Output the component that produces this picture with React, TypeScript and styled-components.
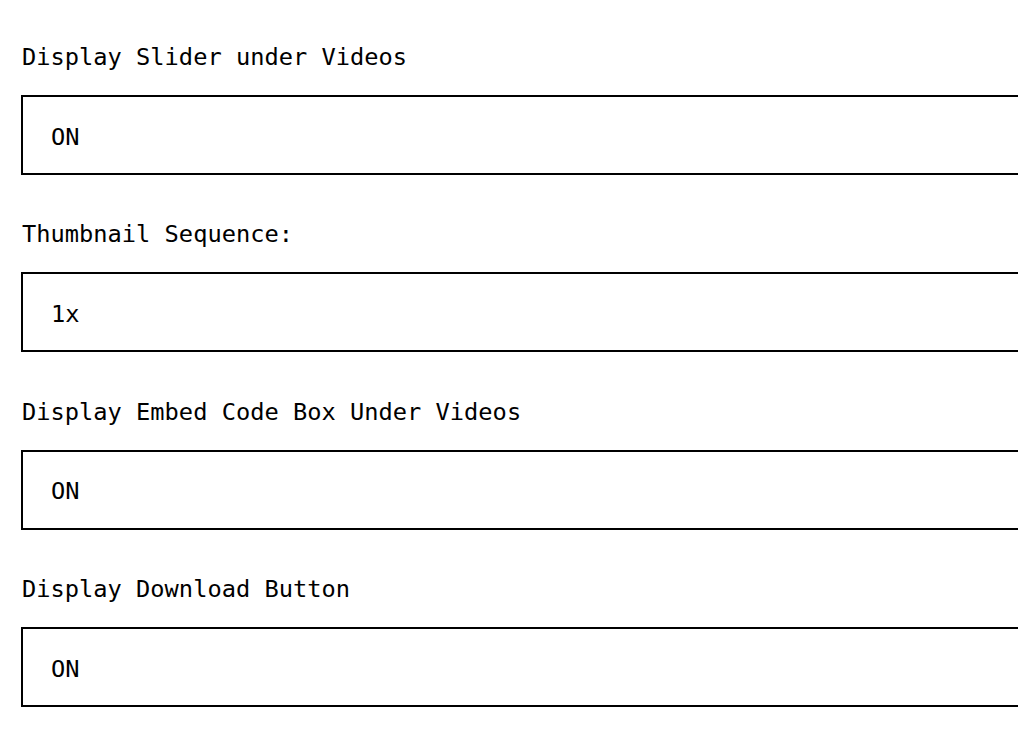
import React from "react";
import styled, { createGlobalStyle } from "styled-components";

const Global = createGlobalStyle`
  html, body {
    margin: 0;
    padding: 0;
    background: #ffffff;
    overflow: hidden;
  }
  body {
    font-family: "DejaVu Sans Mono", "Liberation Mono", monospace;
    color: #000000;
  }
`;

const Page = styled.div`
  display: flex;
  flex-direction: column;
  padding: 43px 0 0 21px;
  width: 1100px;
`;

const Field = styled.section`
  display: flex;
  flex-direction: column;
  margin-bottom: 45.4px;
`;

const Label = styled.label`
  font-size: 23.7px;
  line-height: 28px;
  height: 28px;
  margin-bottom: 24px;
  padding-left: 1px;
  white-space: nowrap;
`;

const Box = styled.div`
  box-sizing: border-box;
  height: 80px;
  border: 2px solid #000000;
  display: flex;
  align-items: center;
  padding: 3px 0 0 28px;
  font-size: 23.7px;
`;

const fields = [
  { label: "Display Slider under Videos", value: "ON" },
  { label: "Thumbnail Sequence:", value: "1x" },
  { label: "Display Embed Code Box Under Videos", value: "ON" },
  { label: "Display Download Button", value: "ON" },
];

export default function App() {
  return (
    <>
      <Global />
      <Page>
        {fields.map((f) => (
          <Field key={f.label}>
            <Label>{f.label}</Label>
            <Box>{f.value}</Box>
          </Field>
        ))}
      </Page>
    </>
  );
}
